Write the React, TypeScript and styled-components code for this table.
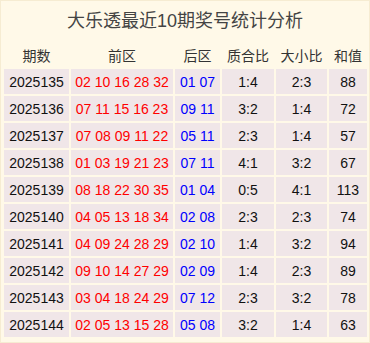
import styled, { createGlobalStyle } from "styled-components";

const GlobalStyle = createGlobalStyle`
  body {
    margin: 0;
    background: #fff9e8;
    font-family: "Liberation Sans", "Noto Sans CJK SC", sans-serif;
  }
`;

const Panel = styled.div`
  box-sizing: border-box;
  width: 370px;
  height: 343px;
  background: #fff9e8;
  border: 1px solid #f6ecd2;
  padding: 1px 1px 3px;
`;

const Title = styled.div`
  height: 38px;
  line-height: 38px;
  text-align: center;
  font-size: 18px;
  color: #444;
`;

const Grid = styled.div`
  display: grid;
  grid-template-columns: 65px 102px 45px 52px 51px 38px;
  grid-auto-rows: 25px;
  gap: 2px;
  padding: 2px;
`;

const HeadCell = styled.div`
  display: flex;
  align-items: center;
  justify-content: center;
  font-size: 14px;
  color: #333;
  white-space: nowrap;
`;

const Cell = styled.div<{ tone?: "red" | "blue" }>`
  display: flex;
  align-items: center;
  justify-content: center;
  background: #f0e6e8;
  font-size: 14px;
  white-space: nowrap;
  color: ${({ tone }) =>
    tone === "red" ? "#ff0000" : tone === "blue" ? "#0000ff" : "#111"};
`;

const HEADERS = ["期数", "前区", "后区", "质合比", "大小比", "和值"];

const DRAWS = [
  ["2025135", "02 10 16 28 32", "01 07", "1:4", "2:3", "88"],
  ["2025136", "07 11 15 16 23", "09 11", "3:2", "1:4", "72"],
  ["2025137", "07 08 09 11 22", "05 11", "2:3", "1:4", "57"],
  ["2025138", "01 03 19 21 23", "07 11", "4:1", "3:2", "67"],
  ["2025139", "08 18 22 30 35", "01 04", "0:5", "4:1", "113"],
  ["2025140", "04 05 13 18 34", "02 08", "2:3", "2:3", "74"],
  ["2025141", "04 09 24 28 29", "02 10", "1:4", "3:2", "94"],
  ["2025142", "09 10 14 27 29", "02 09", "1:4", "2:3", "89"],
  ["2025143", "03 04 18 24 29", "07 12", "2:3", "3:2", "78"],
  ["2025144", "02 05 13 15 28", "05 08", "3:2", "1:4", "63"],
];

export default function App() {
  return (
    <>
      <GlobalStyle />
      <Panel>
        <Title>大乐透最近10期奖号统计分析</Title>
        <Grid>
          {HEADERS.map((h) => (
            <HeadCell key={h}>{h}</HeadCell>
          ))}
          {DRAWS.map((row) =>
            row.map((v, i) => (
              <Cell
                key={row[0] + i}
                tone={i === 1 ? "red" : i === 2 ? "blue" : undefined}
              >
                {v}
              </Cell>
            ))
          )}
        </Grid>
      </Panel>
    </>
  );
}
